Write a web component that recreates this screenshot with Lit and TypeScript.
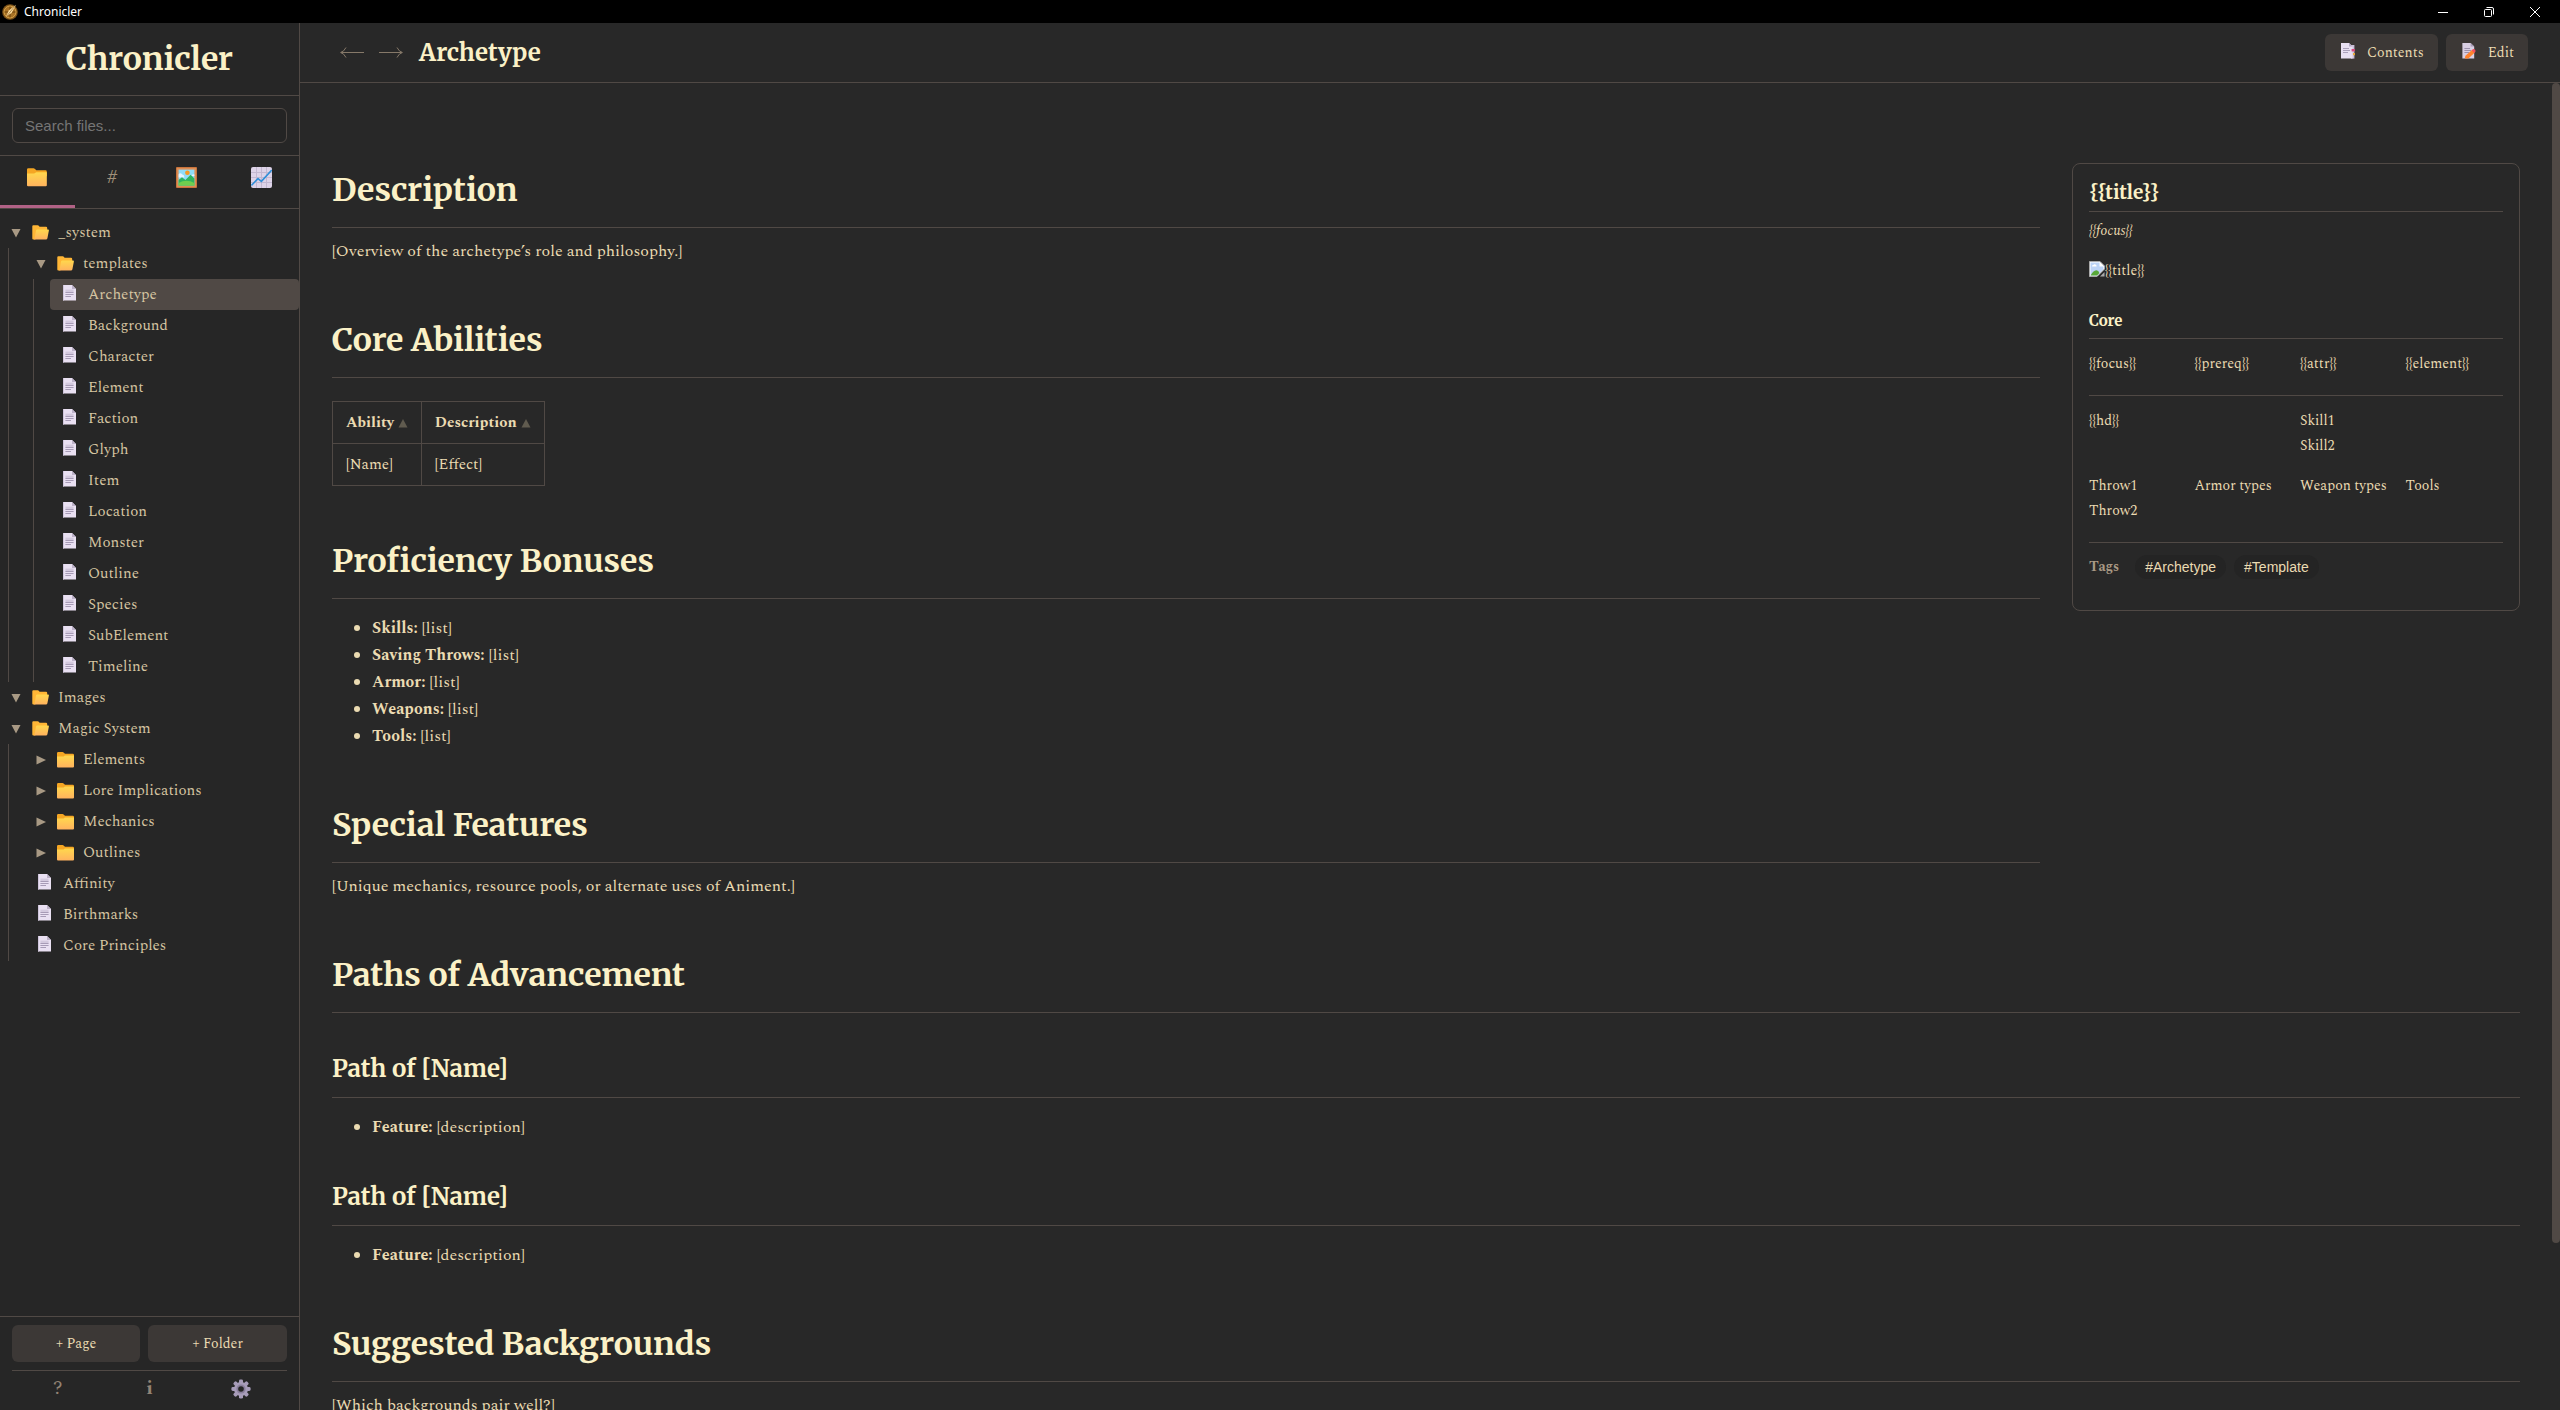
import { LitElement, html, svg, css, nothing } from "lit";
import { customElement, property, state } from "lit/decorators.js";
import { classMap } from "lit/directives/class-map.js";

interface TreeNode {
  name: string;
  kind: "folder" | "file";
  open?: boolean;
  children?: TreeNode[];
}

const file = (name: string): TreeNode => ({ name, kind: "file" });
const folder = (name: string, open = false, children: TreeNode[] = []): TreeNode => ({
  name,
  kind: "folder",
  open,
  children,
});

const TREE: TreeNode[] = [
  folder("_system", true, [
    folder("templates", true, [
      file("Archetype"),
      file("Background"),
      file("Character"),
      file("Element"),
      file("Faction"),
      file("Glyph"),
      file("Item"),
      file("Location"),
      file("Monster"),
      file("Outline"),
      file("Species"),
      file("SubElement"),
      file("Timeline"),
    ]),
  ]),
  folder("Images", true),
  folder("Magic System", true, [
    folder("Elements"),
    folder("Lore Implications"),
    folder("Mechanics"),
    folder("Outlines"),
    file("Affinity"),
    file("Birthmarks"),
    file("Core Principles"),
  ]),
];

const folderGradient = svg`
  <defs>
    <linearGradient id="fold" x1="0" y1="0" x2="0" y2="1">
      <stop offset="0" stop-color="#ffd84d"></stop>
      <stop offset="1" stop-color="#ffb25e"></stop>
    </linearGradient>
  </defs>`;

const folderClosed = (size: number) => html`
  <svg width=${size} height=${size} viewBox="0 0 18 18" aria-hidden="true">
    ${folderGradient}
    <path fill="#f5a623" d="M0 2.2Q0 1 1.2 1H5.6Q6.2 1 6.6 1.4L8 2.8H15.8Q17 2.8 17 4V8H0Z"></path>
    <path fill="url(#fold)" d="M0 5.6H6Q6.6 5.6 7 5.2L7.8 4.5H17V15.6Q17 16.6 16 16.6H1Q0 16.6 0 15.6Z"></path>
  </svg>`;

const folderOpen = html`
  <svg width="18" height="18" viewBox="0 0 18 18" aria-hidden="true">
    ${folderGradient}
    <path fill="#ffb636" d="M0.3 2.2Q0.3 1.2 1.3 1.2H5.6Q6.1 1.2 6.5 1.6L7.6 2.8H14Q15.2 2.8 15.2 4V8L3 15.4H1.3Q0.3 15.4 0.3 14.4Z"></path>
    <path fill="url(#fold)" d="M5.2 5.4H16Q17.2 5.4 16.9 6.6L15.4 14.2Q15.1 15.4 14 15.4H1.6Q2.4 15.2 2.6 14.4L4 6.4Q4.2 5.4 5.2 5.4Z"></path>
  </svg>`;

const pageIcon = html`
  <svg width="18" height="18" viewBox="0 0 18 18" aria-hidden="true">
    <path fill="#e9e0f2" d="M1 1H10L14 5V16.6H1Z"></path>
    <path fill="#bdb2c9" d="M10 1L14 5H10Z"></path>
    <path fill="#cfc5dc" d="M1 1H2V16.6H1Z"></path>
    <path fill="#d3c9de" d="M3.4 5.6H11.6V8H3.4Z"></path>
    <path stroke="#a79bb6" fill="none" d="M3.4 8.5H11.6M3.4 10.5H11.6M3.4 12.5H9"></path>
  </svg>`;

const pictureIcon = html`
  <svg width="21" height="21" viewBox="0 0 21 21" aria-hidden="true">
    <rect width="21" height="21" rx="1" fill="#c8743c"></rect>
    <rect x="1" y="1" width="19" height="19" fill="#dd8d55"></rect>
    <rect x="2.6" y="2.6" width="15.8" height="15.8" fill="#8fdcf7"></rect>
    <path fill="#e3f4fd" d="M2.6 7.5Q4 5 6.4 7.6Q8.6 8 8.4 10.6H2.6ZM18.4 7.4Q16.4 6.6 15 9H18.4Z"></path>
    <circle cx="11.4" cy="5.8" r="2.3" fill="#f59a23"></circle>
    <path fill="#2fb45e" d="M2.6 13L6 10.2L9.4 13L14.6 7.8L18.4 11.4V18.4H2.6Z"></path>
    <path fill="#6fce4f" d="M2.6 16Q10.4 11.4 18.4 16V18.4H2.6Z"></path>
  </svg>`;

const chartIcon = html`
  <svg width="21" height="21" viewBox="0 0 21 21" aria-hidden="true">
    <rect width="21" height="21" rx="2" fill="#ddd3e8"></rect>
    <path stroke="#c3b8d1" fill="none" d="M5.5 0V21M10.5 0V21M15.5 0V21M0 5.5H21M0 10.5H21M0 15.5H21"></path>
    <path stroke="#2f8fd8" stroke-width="1.6" fill="none" d="M0.4 18.4L7 11.6L10.4 14.4L20.8 3"></path>
  </svg>`;

const gearIcon = html`
  <svg width="20" height="20" viewBox="0 0 20 20" aria-hidden="true">
    <g fill="#a79cb9">
      ${[0, 45, 90, 135].map(
        (a) => svg`<rect x="8" y="0.4" width="4" height="19.2" rx="1.4" transform="rotate(${a} 10 10)"></rect>`,
      )}
      <circle cx="10" cy="10" r="7"></circle>
    </g>
    <circle cx="10" cy="10" r="4.6" fill="#8a7f9c"></circle>
    <circle cx="10" cy="10" r="2.8" fill="#262626"></circle>
  </svg>`;

const contentsIcon = html`
  <svg width="18" height="18" viewBox="0 0 18 18" aria-hidden="true">
    <path fill="#cbbfd9" d="M12 3H15.4V16.6H12Z"></path>
    <path fill="#e9e0f2" d="M2 1H10L13.6 4.6V16.6H2Z"></path>
    <path fill="#b5a9c4" d="M10 1L13.6 4.6H10Z"></path>
    <path stroke="#aba0ba" fill="none" d="M4 6.5H10M4 8.5H11M4 10.5H9"></path>
    <rect x="12.6" y="7" width="3.2" height="2.4" fill="#d8467c"></rect>
    <rect x="14" y="11" width="2" height="2.2" fill="#e6a93a"></rect>
  </svg>`;

const editIcon = html`
  <svg width="18" height="18" viewBox="0 0 18 18" aria-hidden="true">
    <path fill="#d9cfe3" d="M2.4 1H10.6L14.2 4.6V16.6H2.4Z"></path>
    <path fill="#a79bb6" d="M10.6 1L14.2 4.6H10.6Z"></path>
    <path stroke="#9c91ac" fill="none" d="M4.4 6.5H10M4.4 8.5H11M4.4 10.5H9"></path>
    <path fill="#ff822d" d="M4.8 16.6L5.4 13.8L12 8L14.6 10.8L8.4 16.6Z"></path>
    <path fill="#f4505c" d="M11.6 8.3L13 7.2Q14.2 6.8 15.2 8Q16 9.2 15.2 10L14.2 11Z"></path>
  </svg>`;

const arrow = (back: boolean) => html`
  <svg width="24" height="12" viewBox="0 0 24 12" fill="none" stroke="currentColor" aria-hidden="true">
    ${back
      ? svg`<path d="M24 6.5H1M6 1.5Q4 5.6 0.6 6.5Q4 7.4 6 11.5"></path>`
      : svg`<path d="M0 6.5H23M18 1.5Q20 5.6 23.4 6.5Q20 7.4 18 11.5"></path>`}
  </svg>`;

const brokenImage = html`
  <svg class="broken" width="16" height="16" viewBox="0 0 16 16" aria-hidden="true">
    <path fill="#fff" stroke="#a9a9a9" d="M0.5 0.5H11L15.5 5V8L8 15.5H0.5Z"></path>
    <path fill="#bcd3f5" d="M1.5 1.5H10.5V5.5H14.5V8L8 14.5H1.5Z"></path>
    <path fill="#fff" d="M3 5.4Q3 4 4.4 4Q5 2.8 6.4 3.4Q7.8 3.8 7.6 5.4Z"></path>
    <path fill="#58a839" d="M1.5 14.5Q4 9.6 7.4 9.2Q9.6 9.4 10.4 12L8 14.5Z"></path>
    <path fill="#a9a9a9" d="M11 15.5L15.5 11V15.5Z"></path>
  </svg>`;

const appLogo = html`
  <svg width="16" height="16" viewBox="0 0 16 16" aria-hidden="true">
    <circle cx="8" cy="8" r="7.8" fill="#7d5219"></circle>
    <circle cx="8" cy="8" r="6" fill="#a87226" stroke="#dba548"></circle>
    <path stroke="#6a430f" fill="none" d="M8 2.6V13.4M2.6 8H13.4"></path>
    <path fill="#ffe0a0" d="M14 0.8L9.6 9L4 12.6L6.8 6.6Z"></path>
    <path stroke="#7d5219" stroke-width="0.6" fill="none" d="M12.6 2.4L5 11.8"></path>
  </svg>`;

/** Sidebar tree of folders and pages. */
@customElement("file-tree")
class FileTree extends LitElement {
  @property({ attribute: false }) nodes: TreeNode[] = [];
  @property() selected = "";

  static styles = css`
    :host {
      display: block;
    }
    ul {
      list-style: none;
      margin: 0;
      padding: 0;
    }
    .branch {
      margin-left: 8px;
      padding-left: 16px;
      border-left: 1px solid #504945;
    }
    .row {
      display: flex;
      align-items: center;
      gap: 8px;
      width: 100%;
      height: 31px;
      padding: 0 8px;
      border: 0;
      border-radius: 4px;
      background: none;
      color: #d5c4a1;
      font: 15px/31px Spectral, "Liberation Serif", serif;
      text-align: left;
      white-space: nowrap;
      cursor: pointer;
    }
    .page {
      padding: 0 12px;
    }
    .page svg {
      margin-bottom: 4px;
    }
    .selected {
      background: #504945;
    }
    .row svg {
      flex: none;
    }
    .twist {
      display: flex;
      justify-content: center;
      width: 16px;
      color: #a89984;
    }
  `;

  private toggle(node: TreeNode) {
    node.open = !node.open;
    this.requestUpdate();
  }

  private pick(node: TreeNode) {
    this.dispatchEvent(new CustomEvent("pick", { detail: node.name }));
  }

  private renderNode(node: TreeNode): unknown {
    if (node.kind === "file") {
      return html`<li>
        <button
          class=${classMap({ row: true, page: true, selected: node.name === this.selected })}
          @click=${() => this.pick(node)}
        >
          ${pageIcon}<span>${node.name}</span>
        </button>
      </li>`;
    }
    return html`<li>
      <button class="row" aria-expanded=${node.open ? "true" : "false"} @click=${() => this.toggle(node)}>
        <span class="twist">
          <svg width="10" height="10" viewBox="0 0 10 10" fill="currentColor" aria-hidden="true">
            ${node.open ? svg`<path d="M0.5 1H9.5L5 9.5Z"></path>` : svg`<path d="M0.5 0.5L10 5L0.5 9.5Z"></path>`}
          </svg>
        </span>
        ${node.open ? folderOpen : folderClosed(18)}<span>${node.name}</span>
      </button>
      ${node.open && node.children?.length
        ? html`<ul class="branch">${node.children.map((c) => this.renderNode(c))}</ul>`
        : nothing}
    </li>`;
  }

  render() {
    return html`<ul>${this.nodes.map((n) => this.renderNode(n))}</ul>`;
  }
}

/** Summary card beside the article. */
@customElement("info-box")
class InfoBox extends LitElement {
  static styles = css`
    :host {
      display: block;
      box-sizing: border-box;
      padding: 16px;
      border: 1px solid #504945;
      border-radius: 8px;
      color: #ebdbb2;
      font: 14px/25px Spectral, "Liberation Serif", serif;
    }
    h3,
    h4 {
      margin: 0;
      padding-bottom: 7px;
      border-bottom: 1px solid #504945;
      color: #fbf1c7;
      font-family: Merriweather, "DejaVu Serif Condensed", serif;
    }
    h3 {
      font-size: 19px;
      line-height: 24px;
    }
    h4 {
      margin-top: 28px;
      font-size: 15px;
      line-height: 20px;
    }
    p {
      margin: 0;
    }
    .focus {
      margin: 6px 0 15px;
      font-style: italic;
    }
    .image {
      display: flex;
      align-items: center;
    }
    .broken {
      margin-bottom: 4px;
    }
    .grid {
      display: grid;
      grid-template-columns: repeat(4, minmax(0, 1fr));
      gap: 15px 8px;
      padding: 12px 0 19px;
      border-bottom: 1px solid #504945;
      white-space: nowrap;
    }
    .wide {
      grid-column: span 2;
    }
    .tags {
      display: flex;
      align-items: center;
      gap: 8px;
      padding: 12px 0 15px;
      line-height: 24px;
    }
    .label {
      margin-right: 8px;
      color: #a89984;
      font-weight: bold;
    }
    .tag {
      padding: 0 10px;
      border-radius: 12px;
      background: #242424;
      color: #ebdbb2;
      font-family: "Liberation Sans", Arial, sans-serif;
      text-decoration: none;
    }
  `;

  render() {
    return html`
      <h3>{{title}}</h3>
      <p class="focus">{{focus}}</p>
      <div class="image">${brokenImage}<span>{{title}}</span></div>
      <h4>Core</h4>
      <div class="grid">
        <span>{{focus}}</span><span>{{prereq}}</span><span>{{attr}}</span><span>{{element}}</span>
      </div>
      <div class="grid">
        <span class="wide">{{hd}}</span>
        <span class="wide">Skill1<br />Skill2</span>
        <span>Throw1<br />Throw2</span>
        <span>Armor types</span>
        <span>Weapon types</span>
        <span>Tools</span>
      </div>
      <div class="tags">
        <span class="label">Tags</span>
        <a class="tag" href="#archetype">#Archetype</a>
        <a class="tag" href="#template">#Template</a>
      </div>
    `;
  }
}

@customElement("app-root")
class AppRoot extends LitElement {
  @state() private page = "Archetype";
  @state() private tab = 0;

  static styles = css`
    :host {
      display: flex;
      flex-direction: column;
      height: 100vh;
      overflow: hidden;
      background: #282828;
      color: #ebdbb2;
      font: 16px/27px Spectral, "Liberation Serif", serif;
    }
    button {
      padding: 0;
      border: 0;
      background: none;
      color: inherit;
      font: inherit;
      cursor: pointer;
    }
    h1,
    h2,
    p,
    ul {
      margin: 0;
    }
    h1,
    h2 {
      color: #fbf1c7;
      font-family: Merriweather, "DejaVu Serif Condensed", serif;
    }

    .titlebar {
      display: flex;
      flex: none;
      align-items: center;
      height: 23px;
      padding: 0 2px;
      background: #000;
      color: #fff;
      font: 12px/23px "Noto Sans", "Open Sans", sans-serif;
    }
    .titlebar .name {
      flex: 1;
      padding-left: 6px;
    }
    .window {
      display: flex;
      align-items: center;
      justify-content: center;
      width: 46px;
      height: 20px;
    }

    .shell {
      display: flex;
      flex: 1;
      min-height: 0;
    }

    .sidebar {
      display: flex;
      flex: none;
      flex-direction: column;
      box-sizing: border-box;
      width: 300px;
      border-right: 1px solid #504945;
      background: #262626;
    }
    .brand {
      padding: 16px 0;
      border-bottom: 1px solid #504945;
      font-size: 32px;
      line-height: 40px;
      text-align: center;
    }
    .search {
      padding: 12px;
      border-bottom: 1px solid #504945;
    }
    .search input {
      display: block;
      box-sizing: border-box;
      width: 100%;
      height: 35px;
      padding: 0 12px;
      border: 1px solid #504945;
      border-radius: 6px;
      background: #242424;
      color: #ebdbb2;
      font: 15px "Liberation Sans", Arial, sans-serif;
    }
    .search input::placeholder {
      color: #757575;
    }
    .tabs {
      display: flex;
      height: 52px;
      border-bottom: 1px solid #504945;
    }
    .tab {
      display: flex;
      flex: 1;
      justify-content: center;
      box-sizing: border-box;
      padding-top: 11px;
      border-bottom: 3px solid transparent;
      color: #a08f78;
      font-size: 20px;
      line-height: 21px;
    }
    .tab.active {
      border-bottom-color: #b16286;
    }
    .tree {
      flex: 1;
      min-height: 0;
      padding-top: 8px;
      overflow: hidden;
    }
    .actions {
      padding: 8px 12px 0;
      border-top: 1px solid #504945;
    }
    .create {
      display: flex;
      gap: 8px;
      padding-bottom: 8px;
      border-bottom: 1px solid #504945;
    }
    .create .chip {
      flex: 1 1 auto;
    }
    .chip {
      display: flex;
      align-items: center;
      justify-content: center;
      gap: 10px;
      height: 37px;
      padding: 0 14px;
      border-radius: 6px;
      background: #3c3836;
      color: #ebdbb2;
      font-size: 14px;
    }
    .chip svg {
      margin-bottom: 4px;
    }
    .tools {
      display: flex;
      height: 39px;
    }
    .tools button {
      display: flex;
      flex: 1;
      align-items: center;
      justify-content: center;
      padding-bottom: 4px;
      color: #928374;
      font-size: 20px;
    }
    .tools .info {
      font-weight: bold;
    }

    .main {
      display: flex;
      flex: 1;
      flex-direction: column;
      min-width: 0;
    }
    .topbar {
      display: flex;
      flex: none;
      align-items: center;
      height: 59px;
      padding: 0 32px;
      border-bottom: 1px solid #504945;
    }
    .nav {
      display: flex;
      align-items: center;
      justify-content: center;
      width: 39px;
      height: 38px;
      padding-bottom: 2px;
      color: #867969;
    }
    .topbar h2 {
      flex: 1;
      padding-left: 9px;
      font-size: 24px;
      line-height: 30px;
    }
    .buttons {
      display: flex;
      gap: 8px;
    }

    .body {
      display: flex;
      flex: 1;
      min-height: 0;
    }
    .scroll {
      flex: 1;
      min-width: 0;
      padding: 80px 32px 0;
      overflow-y: auto;
      scrollbar-width: none;
    }
    .gutter {
      flex: none;
      width: 8px;
    }
    .thumb {
      height: 87.4%;
      border-radius: 4px;
      background: #504945;
    }
    .intro {
      display: flex;
      align-items: flex-start;
      gap: 32px;
    }
    .text {
      flex: 1;
      min-width: 0;
      padding-top: 7px;
    }
    info-box {
      flex: none;
      width: 448px;
    }
    .text h1,
    .rest h1 {
      margin-top: 55px;
      padding-bottom: 17px;
      border-bottom: 1px solid #504945;
      font-size: 32px;
      line-height: 40px;
    }
    .text h1:first-child {
      margin-top: 0;
    }
    .rest h2 {
      margin-top: 41px;
      padding-bottom: 13px;
      border-bottom: 1px solid #504945;
      font-size: 24px;
      line-height: 30px;
    }
    .para {
      padding-top: 10px;
    }
    .list {
      padding: 16px 0 0 40px;
    }
    table {
      margin-top: 23px;
      border-collapse: collapse;
      font-size: 15px;
      line-height: 25px;
    }
    th,
    td {
      padding: 8px 13px;
      border: 1px solid #504945;
      text-align: left;
    }
    th button {
      display: flex;
      align-items: center;
      gap: 4px;
    }
  `;

  private renderList(items: [string, string][]) {
    return html`<ul class="list">
      ${items.map(([k, v]) => html`<li><strong>${k}</strong> ${v}</li>`)}
    </ul>`;
  }

  private renderSidebar() {
    const tabs: [string, unknown][] = [
      ["Files", folderClosed(21)],
      ["Tags", "#"],
      ["Images", pictureIcon],
      ["Reports", chartIcon],
    ];
    return html`<aside class="sidebar">
      <h1 class="brand">Chronicler</h1>
      <div class="search"><input type="search" aria-label="Search files" placeholder="Search files..." /></div>
      <div class="tabs" role="tablist">
        ${tabs.map(
          ([label, icon], i) => html`<button
            role="tab"
            aria-label=${label}
            aria-selected=${i === this.tab ? "true" : "false"}
            class=${classMap({ tab: true, active: i === this.tab })}
            @click=${() => (this.tab = i)}
          >
            ${icon}
          </button>`,
        )}
      </div>
      <nav class="tree">
        <file-tree
          .nodes=${TREE}
          selected=${this.page}
          @pick=${(e: CustomEvent<string>) => (this.page = e.detail)}
        ></file-tree>
      </nav>
      <div class="actions">
        <div class="create">
          <button class="chip">+ Page</button>
          <button class="chip">+ Folder</button>
        </div>
        <div class="tools">
          <button aria-label="Help">?</button>
          <button class="info" aria-label="About">i</button>
          <button aria-label="Settings">${gearIcon}</button>
        </div>
      </div>
    </aside>`;
  }

  private renderSortHeader(label: string) {
    return html`<th>
      <button>
        ${label}
        <svg width="10" height="10" viewBox="0 0 10 10" aria-hidden="true">
          <path fill="#605b4f" d="M0.5 9.5L5 1L9.5 9.5Z"></path>
        </svg>
      </button>
    </th>`;
  }

  render() {
    return html`
      <header class="titlebar">
        ${appLogo}<span class="name">Chronicler</span>
        <button class="window" aria-label="Minimize">
          <svg width="10" height="10" viewBox="0 0 10 10" stroke="#fff"><path d="M0 5.5H10"></path></svg>
        </button>
        <button class="window" aria-label="Restore">
          <svg width="10" height="10" viewBox="0 0 10 10" fill="none" stroke="#fff">
            <rect x="0.5" y="2.5" width="7" height="7" rx="1"></rect>
            <path d="M2.5 0.5H8Q9.5 0.5 9.5 2V7.5"></path>
          </svg>
        </button>
        <button class="window" aria-label="Close">
          <svg width="10" height="10" viewBox="0 0 10 10" stroke="#fff"><path d="M0 0L10 10M10 0L0 10"></path></svg>
        </button>
      </header>
      <div class="shell">
        ${this.renderSidebar()}
        <main class="main">
          <div class="topbar">
            <button class="nav" aria-label="Back">${arrow(true)}</button>
            <button class="nav" aria-label="Forward">${arrow(false)}</button>
            <h2>${this.page}</h2>
            <div class="buttons">
              <button class="chip">${contentsIcon}<span>Contents</span></button>
              <button class="chip">${editIcon}<span>Edit</span></button>
            </div>
          </div>
          <div class="body">
            <article class="scroll">
              <div class="intro">
                <div class="text">
                  <h1>Description</h1>
                  <p class="para">[Overview of the archetype’s role and philosophy.]</p>
                  <h1>Core Abilities</h1>
                  <table>
                    <thead>
                      <tr>${this.renderSortHeader("Ability")}${this.renderSortHeader("Description")}</tr>
                    </thead>
                    <tbody>
                      <tr><td>[Name]</td><td>[Effect]</td></tr>
                    </tbody>
                  </table>
                  <h1>Proficiency Bonuses</h1>
                  ${this.renderList([
                    ["Skills:", "[list]"],
                    ["Saving Throws:", "[list]"],
                    ["Armor:", "[list]"],
                    ["Weapons:", "[list]"],
                    ["Tools:", "[list]"],
                  ])}
                  <h1>Special Features</h1>
                  <p class="para">[Unique mechanics, resource pools, or alternate uses of Animent.]</p>
                </div>
                <info-box></info-box>
              </div>
              <div class="rest">
                <h1>Paths of Advancement</h1>
                <h2>Path of [Name]</h2>
                ${this.renderList([["Feature:", "[description]"]])}
                <h2>Path of [Name]</h2>
                ${this.renderList([["Feature:", "[description]"]])}
                <h1>Suggested Backgrounds</h1>
                <p class="para">[Which backgrounds pair well?]</p>
              </div>
            </article>
            <div class="gutter"><div class="thumb"></div></div>
          </div>
        </main>
      </div>
    `;
  }
}
